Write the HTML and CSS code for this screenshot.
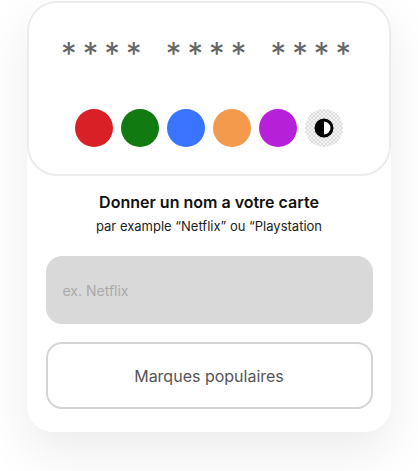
FILE: index.html
```html
<!DOCTYPE html>
<html lang="fr">
<head>
<meta charset="utf-8">
<title>Carte</title>
<link rel="stylesheet" href="styles.css">
</head>
<body>
<div class="page">
  <div class="card">
    <div class="preview">
      <div class="digits">
        <span class="group"><span>*</span><span>*</span><span>*</span><span>*</span></span>
        <span class="group"><span>*</span><span>*</span><span>*</span><span>*</span></span>
        <span class="group"><span>*</span><span>*</span><span>*</span><span>*</span></span>
      </div>
      <div class="swatches">
        <span class="swatch red"></span>
        <span class="swatch green"></span>
        <span class="swatch blue"></span>
        <span class="swatch orange"></span>
        <span class="swatch purple"></span>
        <span class="swatch custom">
          <svg width="20" height="20" viewBox="0 0 20 20">
            <circle cx="10" cy="10" r="8" fill="#fff" stroke="#000" stroke-width="3"/>
            <path d="M10 2 A8 8 0 0 0 10 18 Z" fill="#000"/>
          </svg>
        </span>
      </div>
    </div>
    <h1 class="title">Donner un nom a votre carte</h1>
    <p class="subtitle">par example “Netflix” ou “Playstation</p>
    <div class="field">ex. Netflix</div>
    <div class="button">Marques populaires</div>
  </div>
</div>
</body>
</html>
```

FILE: styles.css
```css
* { box-sizing: border-box; }
html, body { margin: 0; padding: 0; background: #fff; }
body { font-family: Inter, "Noto Sans", sans-serif; color: #111; }

.page {
  padding: 1px 0 39px 27px;
  min-height: 471px;
}

.card {
  width: 364px;
  background: #fff;
  border-radius: 26px;
  box-shadow: 0 20px 50px rgba(0, 0, 0, 0.08);
  padding-bottom: 23px;
  display: flex;
  flex-direction: column;
  align-items: center;
}

.preview {
  width: 364px;
  height: 175px;
  border: 2px solid #ececec;
  border-radius: 30px;
  background: #fff;
  padding-top: 36px;
  display: flex;
  flex-direction: column;
  align-items: center;
}

.digits {
  display: flex;
  gap: 18px;
  color: #666;
  font-size: 31px;
  line-height: 30px;
  height: 30px;
  padding-right: 6px;
}
.group { display: flex; }
.group span { width: 21.7px; text-align: center; }

.swatches {
  margin-top: 40px;
  display: flex;
  gap: 8px;
}
.swatch {
  width: 38px;
  height: 38px;
  border-radius: 50%;
  display: flex;
  align-items: center;
  justify-content: center;
}
.red { background: #d92027; }
.green { background: #117a10; }
.blue { background: #3874ff; }
.orange { background: #f39a4c; }
.purple { background: #b520d8; }
.custom {
  background-color: #f4f4f4;
  background-image:
    linear-gradient(45deg, #dcdcdc 25%, transparent 25%, transparent 75%, #dcdcdc 75%),
    linear-gradient(45deg, #dcdcdc 25%, transparent 25%, transparent 75%, #dcdcdc 75%);
  background-size: 4px 4px;
  background-position: 0 0, 2px 2px;
}

.title {
  margin: 17px 0 0;
  font-size: 16px;
  line-height: 19px;
  font-weight: 600;
  color: #111;
}
.subtitle {
  margin: 6px 0 0;
  font-size: 13px;
  line-height: 16px;
  color: #222;
}

.field {
  margin-top: 22px;
  width: 327px;
  height: 68px;
  border-radius: 16px;
  background: #d9d9d9;
  color: #aaa;
  font-size: 14px;
  padding-left: 17px;
  display: flex;
  align-items: center;
}

.button {
  margin-top: 18px;
  width: 327px;
  height: 67px;
  border: 2px solid #d4d4d4;
  border-radius: 16px;
  color: #555;
  font-size: 16px;
  display: flex;
  align-items: center;
  justify-content: center;
}
```
